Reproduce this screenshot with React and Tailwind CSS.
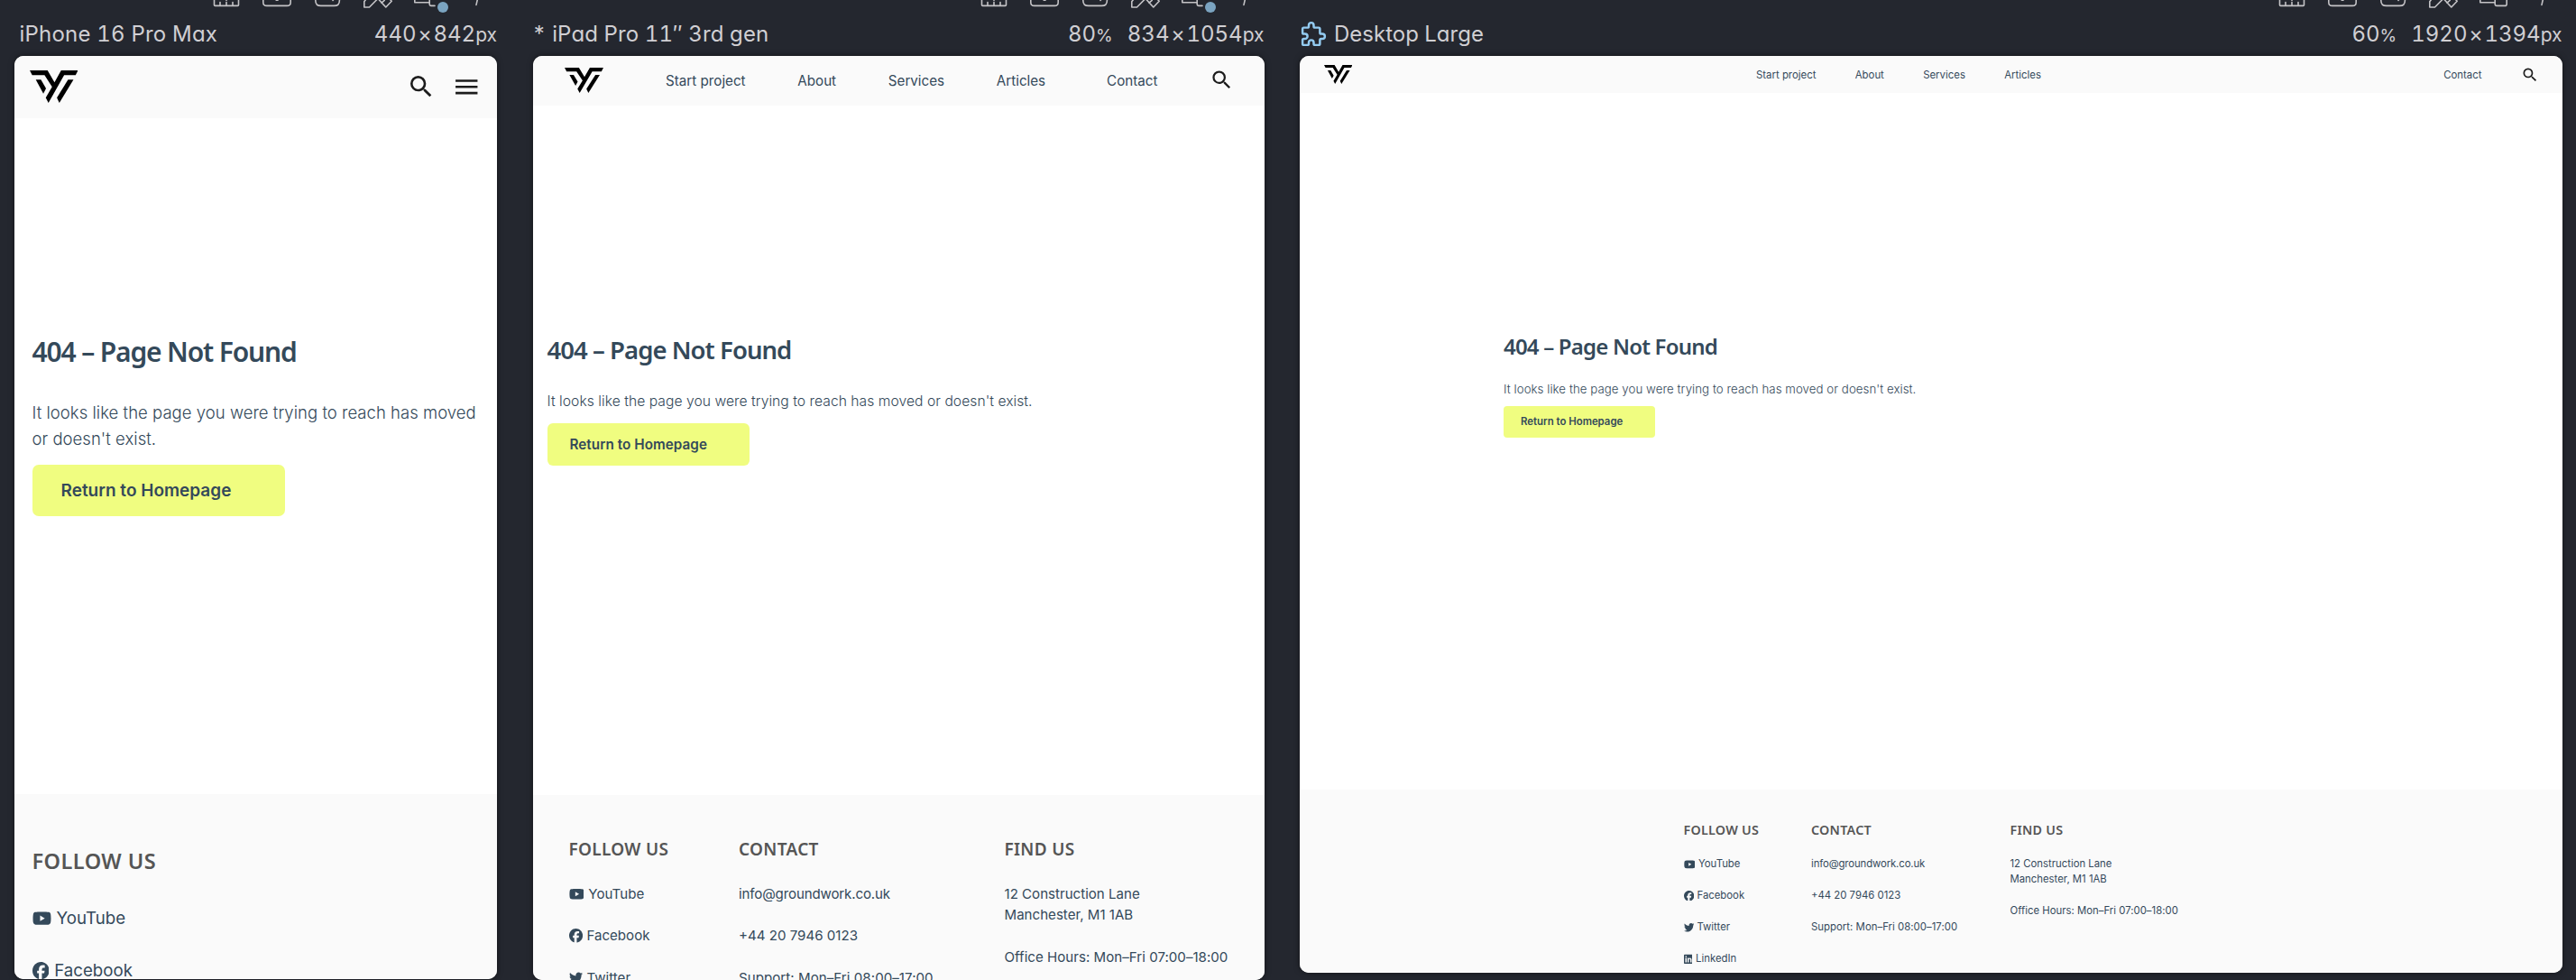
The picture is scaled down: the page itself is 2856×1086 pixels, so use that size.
import { MdMenu, MdSearch } from 'react-icons/md';
import { FaFacebook, FaLinkedin, FaTwitter, FaYoutube } from 'react-icons/fa6';

function Logo({ className }) {
  return (
    <svg className={className} viewBox="0 0 160 108" fill="#000" preserveAspectRatio="none">
      <path d="M0 0H59L82 40L104 0H160L152 16H114L62 108L53 91L74 55L49 16H8Z" />
      <path d="M20 31H37L54 60L45 77Z" />
      <path d="M127 31H145L98 108L90 91Z" />
    </svg>
  );
}

function Toolbar({ dot }) {
  return (
    <svg className="block h-[20px] w-[320px]" viewBox="0 0 320 20" fill="none" stroke="#c4c3c6" strokeWidth="1.6" strokeLinejoin="round" strokeLinecap="round">
      <path d="M6.5 -4V5.4Q6.5 6.4 7.5 6.4H32.5Q33.5 6.4 33.5 5.4V-4M13 6V2.6M20 6V2.6M27 6V2.6M20 0.5V-4" />
      <path d="M60.8 -6V2.4Q60.8 6.4 64.8 6.4H87.2Q91.2 6.4 91.2 2.4V-6" />
      <path d="M75.2 0.2H77" />
      <path d="M118.8 -6V0.4Q118.8 6.4 124.8 6.4H139.4Q145.4 6.4 145.4 0.4V-6M138 0.4L140 -2" />
      <path d="M178.800 -6L172.800 1.800V8H178.500L188 -1.600L196.800 8L203.200 1.200L197 -5M192 3.200L195.200 0.400" />
      {dot ? <path d="M228.800 -4V2.800H245.200M245.200 -4V4.800Q245.200 6.400 246.800 6.400H251" /> : <path d="M228.800 -4V2.800H245.200M245.200 -4V4.800Q245.200 6.400 246.800 6.400H256.200Q258.200 6.400 258.200 4.400V-4" />}
      {dot && <circle cx="260" cy="8" r="6" fill="#7ba4c1" stroke="none" />}
      <path d="M297 5.400L298.700 -2" />
    </svg>
  );
}

function Puzzle() {
  return (
    <svg className="mr-[6px] ml-[-1px] size-[33px]" viewBox="0 0 24 24" fill="none" stroke="#93cbf1" strokeWidth="1.8" strokeLinecap="round" strokeLinejoin="round">
      <path d="M4 7h3a1 1 0 0 0 1 -1v-1a2 2 0 0 1 4 0v1a1 1 0 0 0 1 1h3a1 1 0 0 1 1 1v3a1 1 0 0 0 1 1h1a2 2 0 0 1 0 4h-1a1 1 0 0 0 -1 1v3a1 1 0 0 1 -1 1h-3a1 1 0 0 1 -1 -1v-1a2 2 0 0 0 -4 0v1a1 1 0 0 1 -1 1h-3a1 1 0 0 1 -1 -1v-3a1 1 0 0 1 1 -1h1a2 2 0 0 0 0 -4h-1a1 1 0 0 1 -1 -1v-3a1 1 0 0 1 1 -1" />
    </svg>
  );
}

function Device({ className, panel, icon, name, nameClass, zoom, width, height, dot, children }) {
  return (
    <section className={`flex shrink-0 flex-col ${className}`}>
      <div className="flex h-[20px] justify-end"><Toolbar dot={dot} /></div>
      <div className="flex h-[42px] items-start justify-between pt-[0.500px] text-[24px] leading-[34px] text-[#d0cfd3] [font-feature-settings:'cv11','tnum']">
        <div className="flex items-center">
          {icon}
          <span className={nameClass}>{name}</span>
        </div>
        <div className="flex">
          {zoom && <span className="mr-[16px]">{zoom}<span className="text-[19px]">%</span></span>}
          <span>{width}<span className="px-[1.700px]">×</span>{height}<span className="text-[21px]">px</span></span>
        </div>
      </div>
      <div className={`flex flex-col overflow-hidden rounded-[10px] bg-white shadow-[0_0_6px_rgba(0,0,0,0.5)] ${panel}`}>{children}</div>
    </section>
  );
}

const socials = [
  { Icon: FaYoutube, name: 'YouTube', width: 'w-[1.125em]' },
  { Icon: FaFacebook, name: 'Facebook', width: 'w-[1em]' },
  { Icon: FaTwitter, name: 'Twitter', width: 'w-[1em]' },
  { Icon: FaLinkedin, name: 'LinkedIn', width: 'w-[0.875em]' },
];

function Social({ gap, count }) {
  return (
    <ul className={`flex flex-col ${gap}`}>
      {socials.slice(0, count).map(({ Icon, name, width }) => (
        <li key={name} className="flex items-center gap-[0.32em]">
          <Icon className={`h-[1.03em] shrink-0 ${width}`} preserveAspectRatio="none" />
          <span>{name}</span>
        </li>
      ))}
    </ul>
  );
}

function FooterColumns({ heading, body, gap, grid, count }) {
  return (
    <div className={`grid ${grid}`}>
      <div>
        <h2 className={heading}>FOLLOW US</h2>
        <div className={body}><Social gap={gap} count={count} /></div>
      </div>
      <div>
        <h2 className={heading}>CONTACT</h2>
        <div className={`flex flex-col whitespace-nowrap ${gap} ${body}`}>
          <p className="tracking-[-0.01em]">info@groundwork.co.uk</p>
          <p>+44 20 7946 0123</p>
          <p className="tracking-[0.003em]">Support: Mon–Fri 08:00–17:00</p>
        </div>
      </div>
      <div>
        <h2 className={heading}>FIND US</h2>
        <div className={`flex flex-col whitespace-nowrap ${gap} ${body}`}>
          <p>12 Construction Lane<br />Manchester, M1 1AB</p>
          <p className="tracking-[0.001em]">Office Hours: Mon–Fri 07:00–18:00</p>
        </div>
      </div>
    </div>
  );
}

export default function App() {
  return (
    <div className="flex h-[1086px] w-[2856px] overflow-hidden bg-[#24272f] pl-[16px] font-['Inter',sans-serif] text-[#34495a]">
      <Device className="w-[535px]" panel="h-[1023px]" name="iPhone 16 Pro Max" nameClass="ml-[5.500px] tracking-[0.2px]" width="440" height="842" dot>
        <header className="flex h-[69px] shrink-0 items-start bg-[#fafafa]">
          <Logo className="mt-[16px] ml-[16.500px] h-[36px] w-[53.500px]" />
          <MdSearch className="mt-[18px] ml-auto size-[32px] text-[#1c1c1c]" />
          <MdMenu className="mt-[17.500px] mr-[17.500px] ml-[18.500px] size-[32.500px] text-[#1c1c1c]" />
        </header>
        <main className="flex h-[749px] shrink-0 flex-col items-start pt-[238.500px] pl-[19.500px]">
          <h1 className="font-['Noto_Sans',sans-serif] text-[30px] leading-[40px] font-semibold tracking-[-1.150px]">404 – Page Not Found</h1>
          <p className="mt-[33.500px] text-[18.500px] leading-[29.200px] font-light tracking-[0.035px] whitespace-nowrap">It looks like the page you were trying to reach has moved<br />or doesn't exist.</p>
          <button className="mt-[14px] flex h-[57px] w-[280.500px] items-center rounded-[7px] bg-[#f0fd80] pt-[1.500px] pl-[32px] text-[19px] font-semibold">Return to Homepage</button>
        </main>
        <footer className="grow bg-[#fafafa] pt-[58px] pl-[19.500px]">
          <h2 className="font-['Noto_Sans',sans-serif] text-[23.500px] leading-[32px] font-semibold tracking-[0.45px] text-[#555]">FOLLOW US</h2>
          <div className="mt-[32.700px] text-[18.700px] leading-[29px]"><Social gap="gap-[29px]" count={2} /></div>
        </footer>
      </Device>

      <Device className="ml-[40px] w-[810.500px]" panel="h-[1024px]" name="* iPad Pro 11″ 3rd gen" nameClass="ml-[-1px] tracking-[0.1px]" zoom="80" width="834" height="1054" dot>
        <header className="flex h-[55px] shrink-0 items-start bg-[#fafafa]">
          <Logo className="mt-[13px] ml-[35px] h-[28px] w-[43px]" />
          <nav className="ml-[69px] flex gap-[57.700px] text-[15.200px] leading-[56px]">
            <a>Start project</a><a>About</a><a>Services</a><a>Articles</a>
          </nav>
          <a className="ml-auto text-[15.200px] leading-[56px]">Contact</a>
          <MdSearch className="mt-[13px] mr-[34px] ml-[57px] size-[27px] text-[#1c1c1c]" />
        </header>
        <main className="flex h-[764px] shrink-0 flex-col items-start pt-[252.600px] pl-[15.500px]">
          <h1 className="font-['Noto_Sans',sans-serif] text-[27.500px] leading-[36px] font-semibold tracking-[-0.950px]">404 – Page Not Found</h1>
          <p className="mt-[27.700px] text-[15.650px] leading-[24.400px] font-light tracking-[0.045px]">It looks like the page you were trying to reach has moved or doesn't exist.</p>
          <button className="mt-[11.600px] flex h-[46.300px] w-[224.500px] items-center rounded-[6px] bg-[#f0fd80] pt-[1.500px] pl-[25px] text-[15.250px] font-semibold tracking-[0.05px]">Return to Homepage</button>
        </main>
        <footer className="grow bg-[#fafafa] pt-[46.600px] pl-[39.500px]">
          <FooterColumns
            grid="grid-cols-[188.500px_294.500px_260px]"
            heading="font-['Noto_Sans',sans-serif] text-[19px] leading-[26px] font-semibold tracking-[0.3px] text-[#555]"
            body="mt-[25.200px] text-[15.100px] leading-[23.300px]"
            gap="gap-[23.400px]"
            count={3}
          />
        </footer>
      </Device>

      <Device className="ml-[39.500px] w-[1399.500px]" panel="h-[1016px]" icon={<Puzzle />} name="Desktop Large" zoom="60" width="1920" height="1394">
        <header className="flex h-[41px] shrink-0 items-start bg-[#fafafa]">
          <Logo className="mt-[10px] ml-[26.500px] h-[21px] w-[31.500px]" />
          <nav className="ml-[448px] flex gap-[43.300px] text-[11.400px] leading-[42px]">
            <a>Start project</a><a>About</a><a>Services</a><a>Articles</a>
          </nav>
          <a className="ml-auto text-[11.400px] leading-[42px]">Contact</a>
          <MdSearch className="mt-[10.500px] mr-[26px] ml-[43px] size-[20px] text-[#1c1c1c]" />
        </header>
        <main className="flex h-[771.500px] shrink-0 flex-col items-start pt-[265px] pl-[226px]">
          <h1 className="font-['Noto_Sans',sans-serif] text-[24px] leading-[32px] font-semibold tracking-[-0.800px]">404 – Page Not Found</h1>
          <p className="mt-[21.200px] text-[13.250px] leading-[20px] font-light tracking-[0.060px]">It looks like the page you were trying to reach has moved or doesn't exist.</p>
          <button className="mt-[8.800px] flex h-[34.700px] w-[167.500px] items-center rounded-[4px] bg-[#f0fd80] pt-[1px] pl-[19px] text-[11.400px] font-semibold">Return to Homepage</button>
        </main>
        <footer className="grow bg-[#fafafa] pt-[35px] pl-[425.500px]">
          <FooterColumns
            grid="grid-cols-[141.500px_220.500px_200px]"
            heading="font-['Noto_Sans',sans-serif] text-[14.300px] leading-[20px] font-semibold tracking-[0.25px] text-[#555]"
            body="mt-[19.100px] text-[11.350px] leading-[17.500px]"
            gap="gap-[17.500px]"
            count={4}
          />
        </footer>
      </Device>
    </div>
  );
}
